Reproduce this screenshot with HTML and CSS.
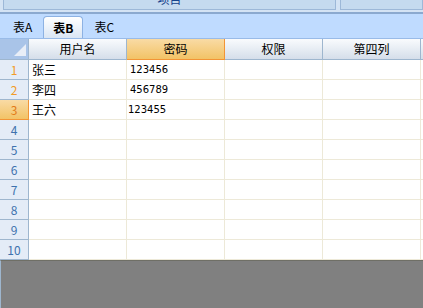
FILE: index.html
```html
<!DOCTYPE html>
<html lang="zh-CN">
<head>
    <meta charset="UTF-8">
    <title>表格</title>
    <link rel="stylesheet" href="styles.css">
</head>
<body>
    <div class="toolbar">
        <div class="tool-btn wide"><span>项目</span></div>
        <div class="tool-btn"></div>
    </div>
    <div class="tabbar">
        <div class="tab">表A</div>
        <div class="tab active">表B</div>
        <div class="tab">表C</div>
    </div>
    <div class="sheet">
        <div class="corner">
            <svg width="12" height="12" viewBox="0 0 12 12"><polygon points="12,0 12,12 0,12" fill="#e8eef7"/></svg>
        </div>
        <div class="col-head">用户名</div>
        <div class="col-head current">密码</div>
        <div class="col-head">权限</div>
        <div class="col-head">第四列</div>
        <div class="col-head"></div>

        <div class="row-head used">1</div><div class="cell">张三</div><div class="cell num">123456</div><div class="cell"></div><div class="cell"></div><div class="cell"></div>
        <div class="row-head used">2</div><div class="cell">李四</div><div class="cell num">456789</div><div class="cell"></div><div class="cell"></div><div class="cell"></div>
        <div class="row-head current">3</div><div class="cell">王六</div><div class="cell num edit">123455</div><div class="cell"></div><div class="cell"></div><div class="cell"></div>
        <div class="row-head">4</div><div class="cell"></div><div class="cell"></div><div class="cell"></div><div class="cell"></div><div class="cell"></div>
        <div class="row-head">5</div><div class="cell"></div><div class="cell"></div><div class="cell"></div><div class="cell"></div><div class="cell"></div>
        <div class="row-head">6</div><div class="cell"></div><div class="cell"></div><div class="cell"></div><div class="cell"></div><div class="cell"></div>
        <div class="row-head">7</div><div class="cell"></div><div class="cell"></div><div class="cell"></div><div class="cell"></div><div class="cell"></div>
        <div class="row-head">8</div><div class="cell"></div><div class="cell"></div><div class="cell"></div><div class="cell"></div><div class="cell"></div>
        <div class="row-head">9</div><div class="cell"></div><div class="cell"></div><div class="cell"></div><div class="cell"></div><div class="cell"></div>
        <div class="row-head">10</div><div class="cell"></div><div class="cell"></div><div class="cell"></div><div class="cell"></div><div class="cell"></div>
    </div>
    <div class="empty"></div>
</body>
</html>
```

FILE: styles.css
```css
body {
    margin: 0;
    width: 423px;
    height: 308px;
    overflow: hidden;
    font-family: "Noto Sans CJK SC", "DejaVu Sans", sans-serif;
    font-size: 12px;
    color: #000000;
    background-color: #808080;
}

.toolbar {
    display: flex;
    gap: 4px;
    height: 12px;
    padding-left: 3px;
    background-color: #d4e3f4;
    border-bottom: 2px solid #8ba9cf;
}

.tool-btn {
    flex: 1;
    height: 9px;
    overflow: hidden;
    background-color: #c5daef;
    border: 1px solid #9db8d8;
    border-top: none;
    text-align: center;
    color: #15428b;
}

.tool-btn.wide {
    flex: 0 0 331px;
}

.tool-btn span {
    display: block;
    margin-top: -9px;
    line-height: 16px;
}

.tabbar {
    display: flex;
    align-items: flex-end;
    height: 24px;
    padding-left: 6px;
    background-color: #bfdbff;
    border-bottom: 1px solid #99bbe8;
}

.tab {
    height: 22px;
    line-height: 22px;
    padding: 0 7px;
    margin-right: 4px;
}

.tab.active {
    font-weight: bold;
    height: 21px;
    line-height: 21px;
    padding: 0 9px;
    border: 1px solid #8db2e3;
    border-bottom: none;
    border-radius: 4px 4px 0 0;
    background: linear-gradient(#ffffff, #dae6f4);
}

.sheet {
    display: grid;
    grid-template-columns: 29px 98px 98px 98px 98px 1fr;
    grid-template-rows: 21px repeat(10, 20px);
    background-color: #ffffff;
}

.sheet > div {
    box-sizing: border-box;
    border-right: 1px solid #ede9d8;
    border-bottom: 1px solid #ede9d8;
    white-space: nowrap;
    overflow: hidden;
}

.sheet > .corner {
    display: flex;
    align-items: flex-end;
    justify-content: flex-end;
    padding: 0 2px 3px 0;
    background-color: #a9c4e8;
    border-right: 1px solid #9eb6ce;
    border-bottom: 1px solid #9eb6ce;
}

.sheet > .col-head {
    text-align: center;
    line-height: 20px;
    background: linear-gradient(#f9fbfd, #d5deea);
    border-right: 1px solid #9eb6ce;
    border-bottom: 1px solid #9eb6ce;
}

.sheet > .col-head.current {
    background: linear-gradient(#f9dba5, #f2c366);
    border-right: 1px solid #f29536;
    border-bottom: 1px solid #f29536;
}

.sheet > .row-head {
    text-align: center;
    line-height: 19px;
    color: #3e72ae;
    background-color: #e4ecf7;
    border-right: 1px solid #9eb6ce;
    border-bottom: 1px solid #9eb6ce;
}

.sheet > .row-head.used {
    color: #f29b27;
}

.sheet > .row-head.current {
    color: #e27a16;
    background: linear-gradient(#f9dba5, #f2c366);
    border-right: 1px solid #f29536;
    border-bottom: 1px solid #f29536;
}

.cell {
    line-height: 19px;
    padding-left: 3px;
}

.cell.num {
    font-family: "DejaVu Sans", sans-serif;
    font-size: 10px;
}

.cell.edit {
    padding-left: 1px;
}

.empty {
    height: 48px;
    background-color: #808080;
    border-top: 1px solid #6f6f66;
    border-left: 1px solid #9eb6ce;
}
```
